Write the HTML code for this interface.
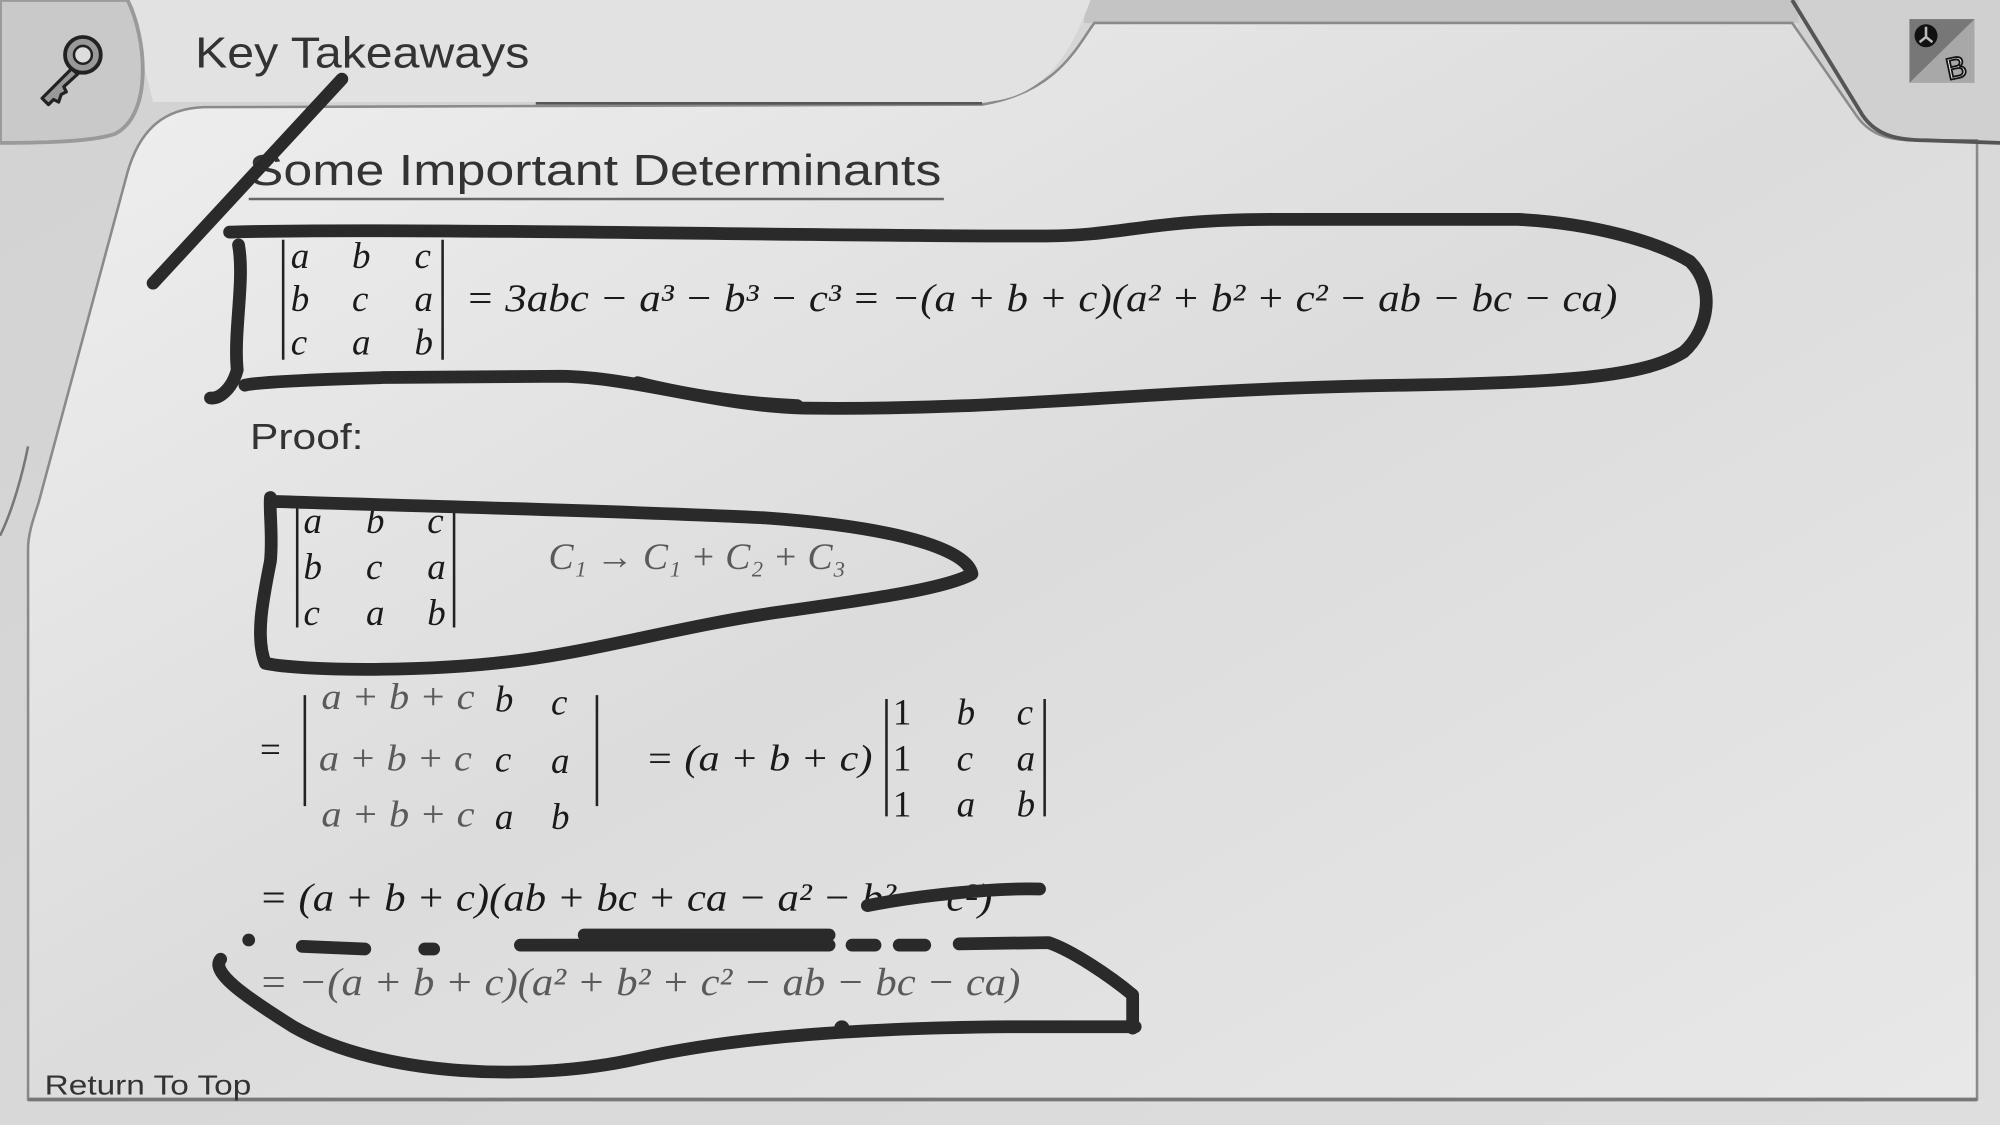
<!DOCTYPE html>
<html><head><meta charset="utf-8"><style>
html,body{margin:0;padding:0;width:2000px;height:1125px;overflow:hidden;background:#d8d8d8}
svg{display:block}
.m{font-family:"Liberation Serif","DejaVu Serif",serif;font-style:italic;font-size:29px;fill:#1a1a1a}
.g{fill:#5a5a5a}
.s{font-family:"Liberation Sans","DejaVu Sans",sans-serif;fill:#333}
.p{fill:none;stroke:#2a2a2a;stroke-width:10;stroke-linecap:round;stroke-linejoin:round}
</style></head><body>
<svg width="2000" height="1125" viewBox="0 0 1568 882" xmlns="http://www.w3.org/2000/svg">
<defs>
<linearGradient id="bg" x1="0" y1="0" x2="1" y2="1"><stop offset="0" stop-color="#d2d2d2"/><stop offset="1" stop-color="#dedede"/></linearGradient>
<linearGradient id="pn" x1="0" y1="0" x2="1" y2="1"><stop offset="0" stop-color="#f0f0f0"/><stop offset="0.5" stop-color="#dcdcdc"/><stop offset="1" stop-color="#e8e8e8"/></linearGradient>
</defs>
<rect width="1568" height="882" fill="url(#bg)"/>
<rect x="850" y="0" width="560" height="18" fill="#c4c4c4"/>
<rect x="1410" y="0" width="158" height="112" fill="#d0d0d0"/>
<!-- main panel -->
<path d="M160,84 L770,82 C830,72 845,35 858,18 L1405,18 L1455,90 C1465,105 1480,110 1500,110 L1550,110 L1550,862 L22,862 L22,430 C22,420 25,410 30,395 L100,135 C110,100 130,85 160,84 Z" fill="url(#pn)" stroke="#8a8a8a" stroke-width="2"/>
<!-- header bar -->
<path d="M100,0 L855,0 C840,40 820,78 770,80 L120,80 Z" fill="#e2e2e2"/>
<line x1="420" y1="81" x2="770" y2="81" stroke="#555" stroke-width="2"/>
<!-- key tab -->
<path d="M0,0 L100,0 C115,30 120,90 90,105 C70,112 20,112 0,112 Z" fill="#c9c9c9" stroke="#9a9a9a" stroke-width="3"/>
<path d="M1405,0 L1460,90 C1470,105 1485,110 1510,110 L1568,112" fill="none" stroke="#555" stroke-width="3"/>
<path d="M0,420 C10,400 18,370 22,350" fill="none" stroke="#777" stroke-width="2"/>
<line x1="22" y1="862" x2="1550" y2="862" stroke="#777" stroke-width="3"/>
<!-- key icon -->
<circle cx="65" cy="43" r="14" fill="#999" stroke="#222" stroke-width="3"/>
<circle cx="65" cy="43" r="7" fill="#ddd" stroke="#222" stroke-width="2"/>
<path d="M56,54 L33,77 L38,82 L42,78 L46,80 L48,74 L52,72 L50,68 L61,58 Z" fill="#999" stroke="#222" stroke-width="2.5" stroke-linejoin="round"/>
<!-- logo -->
<rect x="1497" y="15" width="51" height="50" fill="#a8a8a8"/>
<path d="M1497,15 L1548,15 L1497,65 Z" fill="#777"/>
<circle cx="1510" cy="28" r="9" fill="#111"/>
<path d="M1510,21 L1510,30 M1505,33 L1510,29 L1515,33" stroke="#bbb" stroke-width="2" fill="none"/>
<text x="1525" y="61" font-family="Liberation Sans,sans-serif" font-size="24" fill="#e8e8e8" stroke="#111" stroke-width="1.4" transform="rotate(-12 1535 50)">B</text>
<!-- texts -->
<text x="153" y="53" class="s" font-size="34" textLength="262" lengthAdjust="spacingAndGlyphs">Key Takeaways</text>
<text x="195" y="145" class="s" font-size="34" textLength="543" lengthAdjust="spacingAndGlyphs">Some Important Determinants</text>
<line x1="195" y1="156" x2="740" y2="156" stroke="#666" stroke-width="2"/>
<!-- det1 -->
<line x1="222" y1="188" x2="222" y2="282" stroke="#222" stroke-width="2"/>
<line x1="347" y1="188" x2="347" y2="282" stroke="#222" stroke-width="2"/>
<g class="m"><text x="228" y="210">a</text><text x="276" y="210">b</text><text x="325" y="210">c</text>
<text x="228" y="244">b</text><text x="276" y="244">c</text><text x="325" y="244">a</text>
<text x="228" y="278">c</text><text x="276" y="278">a</text><text x="325" y="278">b</text>
<text x="365" y="244" font-size="31" textLength="903" lengthAdjust="spacingAndGlyphs">= 3abc − a³ − b³ − c³ = −(a + b + c)(a² + b² + c² − ab − bc − ca)</text></g>
<text x="196" y="352" class="s" font-size="28" fill="#555" textLength="89" lengthAdjust="spacingAndGlyphs">Proof:</text>
<!-- det2 -->
<line x1="233" y1="398" x2="233" y2="492" stroke="#222" stroke-width="2"/>
<line x1="356" y1="398" x2="356" y2="492" stroke="#222" stroke-width="2"/>
<g class="m"><text x="238" y="418">a</text><text x="287" y="418">b</text><text x="335" y="418">c</text>
<text x="238" y="454">b</text><text x="287" y="454">c</text><text x="335" y="454">a</text>
<text x="238" y="490">c</text><text x="287" y="490">a</text><text x="335" y="490">b</text>
<text x="430" y="446" class="g" textLength="233" lengthAdjust="spacingAndGlyphs">C₁ → C₁ + C₂ + C₃</text></g>
<!-- det3 -->
<text x="202" y="597" class="m" font-style="normal">=</text>
<line x1="239" y1="545" x2="239" y2="632" stroke="#222" stroke-width="2"/>
<line x1="468" y1="545" x2="468" y2="632" stroke="#222" stroke-width="2"/>
<g class="m"><text x="252" y="556" class="g" textLength="120" lengthAdjust="spacingAndGlyphs">a + b + c</text><text x="388" y="558">b</text><text x="432" y="560">c</text>
<text x="250" y="604" class="g" textLength="120" lengthAdjust="spacingAndGlyphs">a + b + c</text><text x="388" y="605">c</text><text x="432" y="606">a</text>
<text x="252" y="648" class="g" textLength="120" lengthAdjust="spacingAndGlyphs">a + b + c</text><text x="388" y="650">a</text><text x="432" y="650">b</text>
<text x="506" y="604" textLength="178" lengthAdjust="spacingAndGlyphs">= (a + b + c)</text></g>
<line x1="695" y1="548" x2="695" y2="640" stroke="#222" stroke-width="2"/>
<line x1="819" y1="548" x2="819" y2="640" stroke="#222" stroke-width="2"/>
<g class="m"><text x="700" y="568" font-style="normal">1</text><text x="750" y="568">b</text><text x="797" y="568">c</text>
<text x="700" y="604" font-style="normal">1</text><text x="750" y="604">c</text><text x="797" y="604">a</text>
<text x="700" y="640" font-style="normal">1</text><text x="750" y="640">a</text><text x="797" y="640">b</text>
<text x="203" y="714" font-size="31" textLength="575" lengthAdjust="spacingAndGlyphs">= (a + b + c)(ab + bc + ca − a² − b² − c²)</text>
<text x="203" y="780" font-size="31" class="g" textLength="597" lengthAdjust="spacingAndGlyphs">= −(a + b + c)(a² + b² + c² − ab − bc − ca)</text></g>
<text x="35" y="858" class="s" font-size="22" textLength="162" lengthAdjust="spacingAndGlyphs">Return To Top</text>
<!-- pen strokes -->
<path class="p" d="M120,222 L268,62"/>
<path class="p" d="M180,182 C300,178 700,186 820,185 C880,185 900,172 1000,172 L1190,172 C1250,175 1300,190 1325,205 C1345,225 1340,258 1320,276 C1290,295 1230,300 1100,302 C900,305 800,322 630,320 C560,318 500,296 440,295 L300,296 C230,298 200,300 192,302"/>
<path class="p" d="M187,192 C192,220 183,260 186,290 C182,305 172,313 165,312"/>
<path class="p" d="M500,300 C540,310 580,316 625,318" stroke-width="14"/>
<path class="p" d="M212,393 C260,395 480,400 600,406 C700,413 758,430 762,450 C740,462 680,470 610,480 C540,490 480,507 420,516 C340,528 235,526 208,520 C200,500 206,470 212,440 C214,420 211,400 212,390"/>
<path class="p" d="M680,710 C720,702 780,696 815,697"/>
<circle cx="195" cy="737" r="5" fill="#2a2a2a"/>
<path class="p" d="M237,742 L286,744 M333,744 L340,744 M408,741 L650,741 M668,741 L686,741 M705,741 L725,741 M752,740 L822,739 C840,745 870,765 888,780 L888,806"/>
<path class="p" d="M458,733 L650,733" stroke-width="14"/>
<path class="p" d="M173,752 C165,762 190,780 230,805 C300,845 420,848 500,830 C580,812 680,806 790,805 L890,805"/>
<circle cx="660" cy="806" r="6" fill="#2a2a2a"/>
</svg>
</body></html>
